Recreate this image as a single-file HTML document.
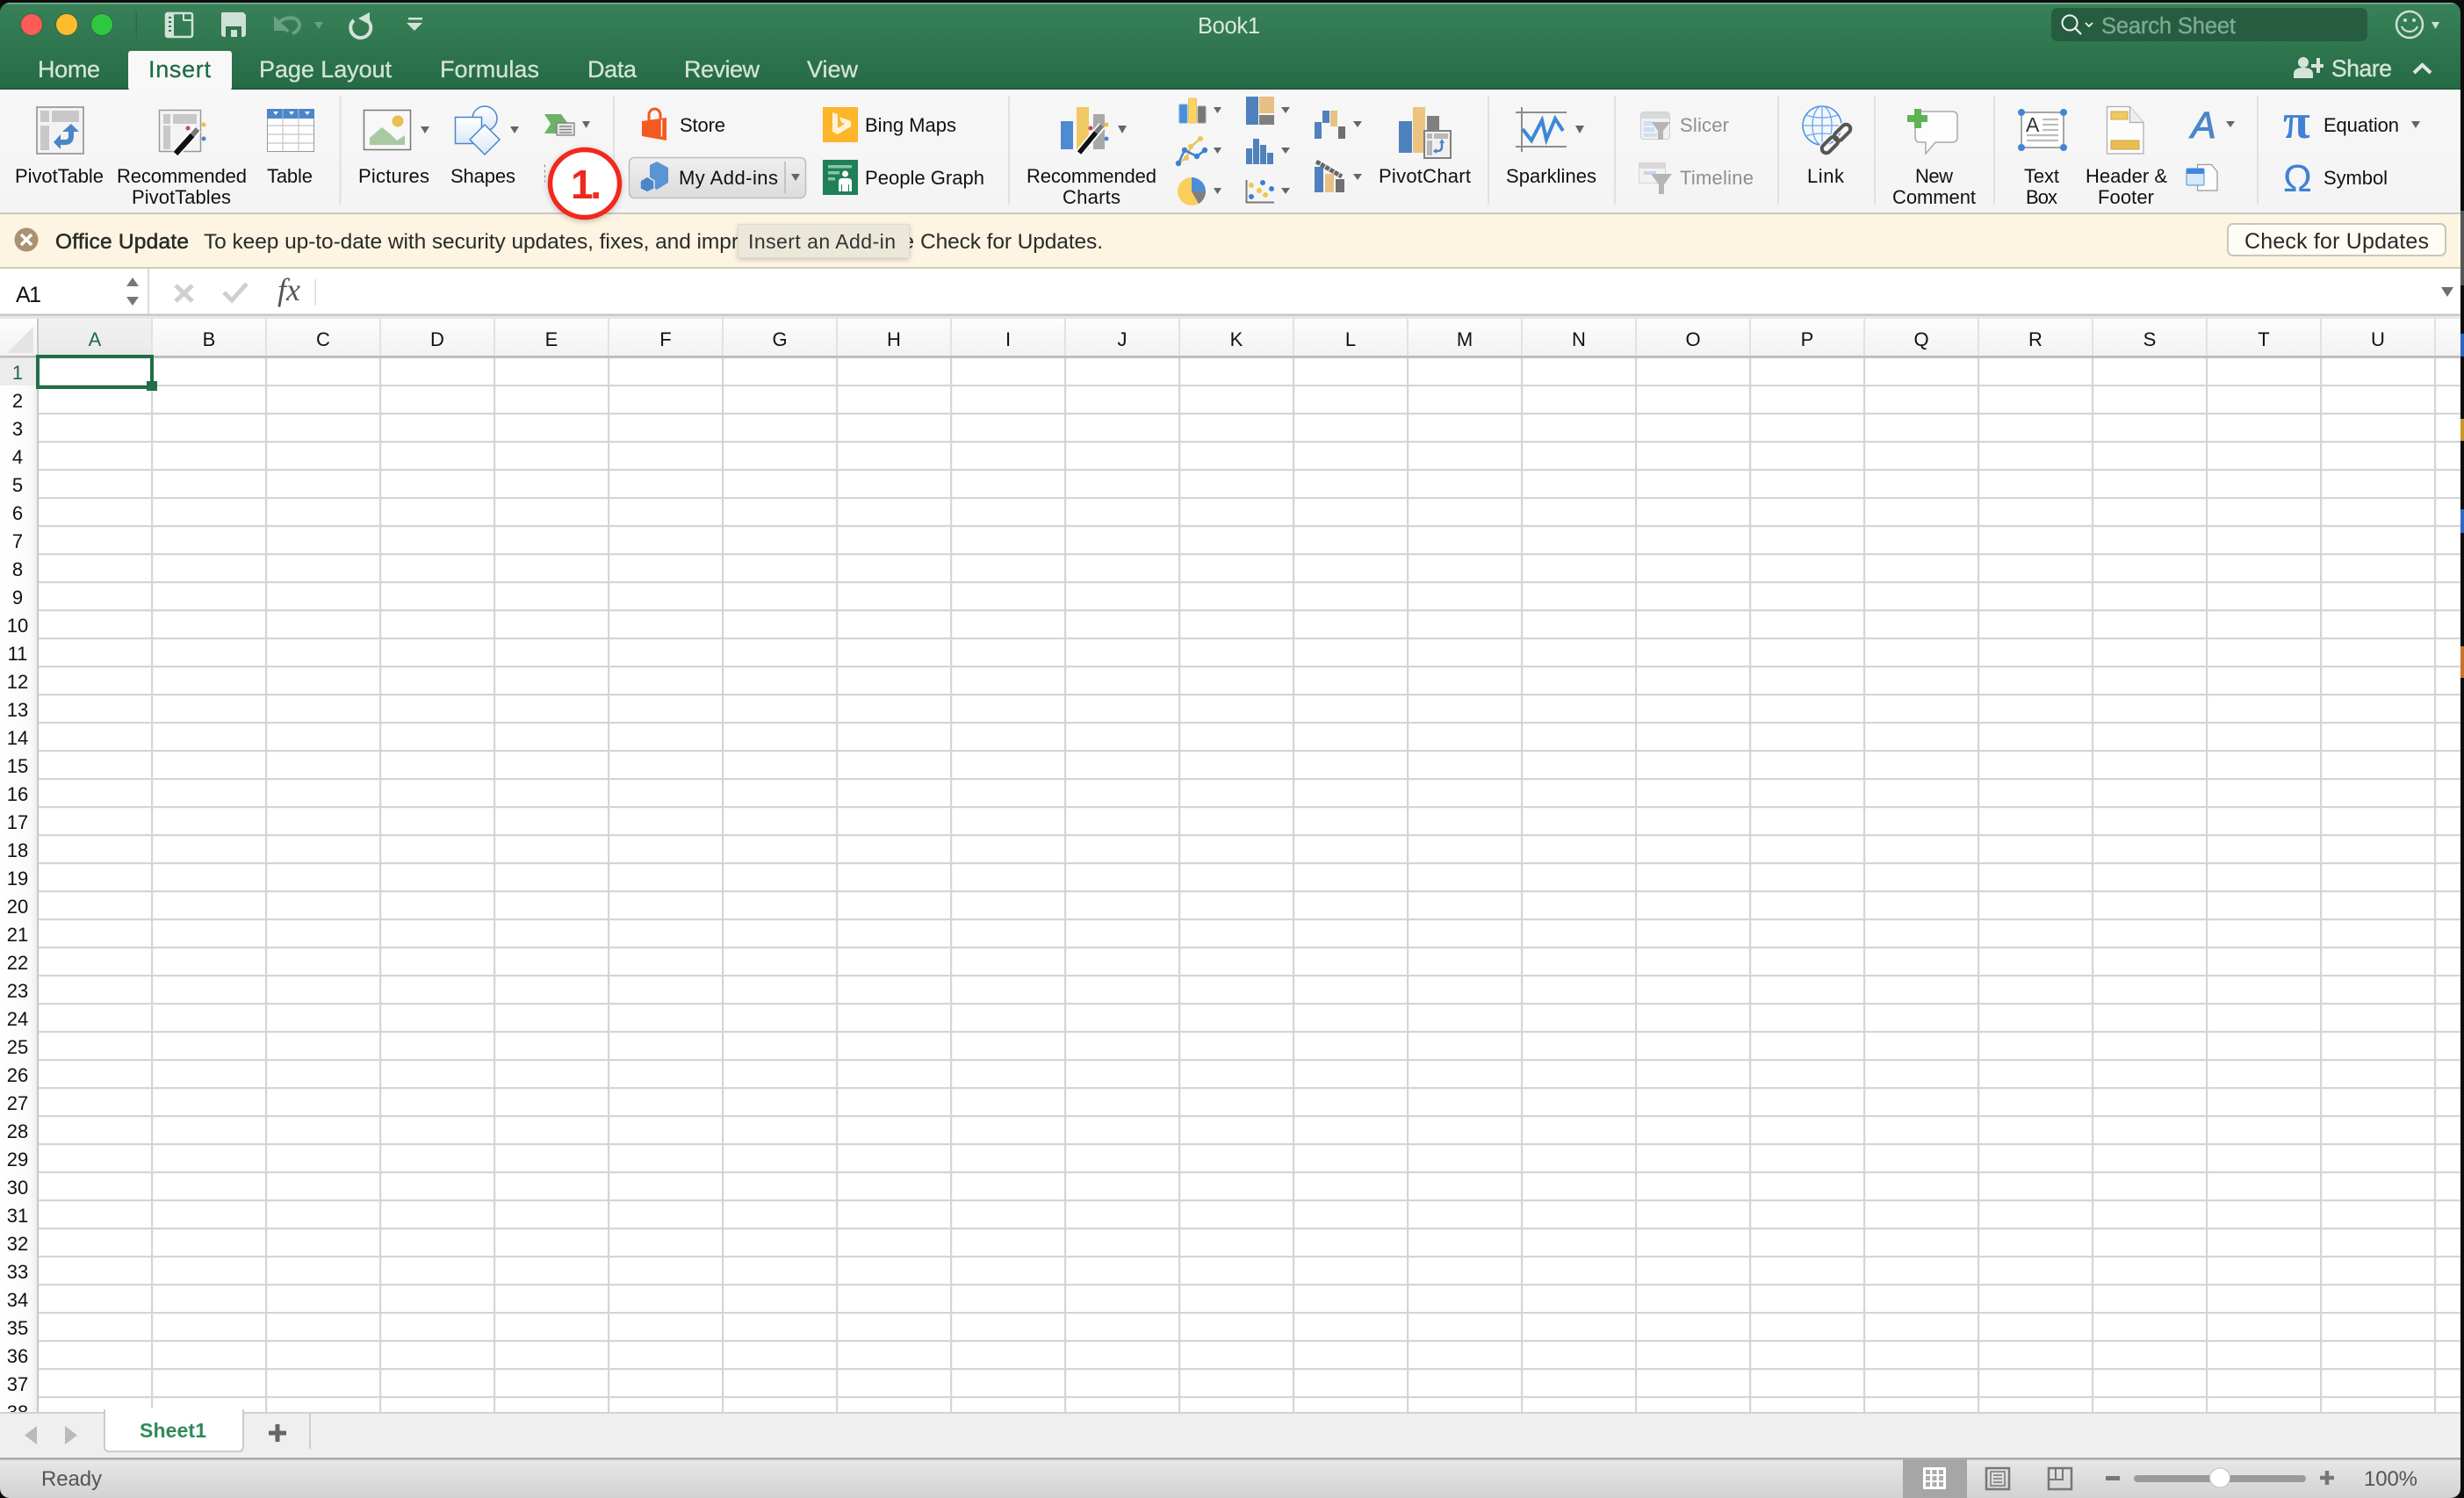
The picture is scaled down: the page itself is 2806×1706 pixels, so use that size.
<!DOCTYPE html>
<html><head><meta charset="utf-8"><title>Book1</title>
<style>
html,body{margin:0;padding:0;background:#0c0c0c;width:2806px;height:1706px;overflow:hidden}
svg{display:block;position:absolute;left:0;top:0;filter:blur(.35px)}
text{font-family:"Liberation Sans",sans-serif;white-space:pre}
.tab{font-size:27px;fill:#d3e3da;stroke:#d3e3da;stroke-width:.3px}
.l{font-size:22px;fill:#111}
.c{font-size:22px;fill:#111;text-anchor:middle}
.r{font-size:22px;fill:#111;text-anchor:middle}
.y{font-size:24.5px;fill:#2a2a2a}
</style></head><body>
<svg width="2806" height="1706" viewBox="0 0 2806 1706" xmlns="http://www.w3.org/2000/svg">
<defs>
<clipPath id="win"><rect x="0" y="3" width="2802" height="1703" rx="11"/></clipPath>
<linearGradient id="tb" x1="0" y1="0" x2="0" y2="1"><stop offset="0" stop-color="#398259"/><stop offset="1" stop-color="#256a45"/></linearGradient>
<linearGradient id="hd" x1="0" y1="0" x2="0" y2="1"><stop offset="0" stop-color="#fdfdfd"/><stop offset="1" stop-color="#f2f2f2"/></linearGradient>
<linearGradient id="hda" x1="0" y1="0" x2="0" y2="1"><stop offset="0" stop-color="#f2f2f2"/><stop offset="1" stop-color="#e9e9e9"/></linearGradient>
<linearGradient id="rh" x1="0" y1="0" x2="1" y2="0"><stop offset="0" stop-color="#fff"/><stop offset=".8" stop-color="#fafafa"/><stop offset="1" stop-color="#ececec"/></linearGradient>
<linearGradient id="st" x1="0" y1="0" x2="0" y2="1"><stop offset="0" stop-color="#e8e8e8"/><stop offset="1" stop-color="#d2d2d2"/></linearGradient>
<linearGradient id="btn" x1="0" y1="0" x2="0" y2="1"><stop offset="0" stop-color="#efefef"/><stop offset="1" stop-color="#dcdcdc"/></linearGradient>
<linearGradient id="shp" x1="0" y1="0" x2="0" y2="1"><stop offset="0" stop-color="#fff"/><stop offset="1" stop-color="#dbe8f7"/></linearGradient>
<linearGradient id="rb" x1="0" y1="0" x2="0" y2="1"><stop offset="0" stop-color="#f7f7f7"/><stop offset="1" stop-color="#f4f4f4"/></linearGradient>
<pattern id="grid" x="43" y="407" width="130" height="32" patternUnits="userSpaceOnUse">
<rect width="130" height="32" fill="#fff"/>
<rect x="0" y="0" width="130" height="1.2" fill="#d5d5d5"/><rect x="0" y="31" width="130" height="1" fill="#d5d5d5"/>
<rect x="0" y="0" width="1.2" height="32" fill="#d5d5d5"/><rect x="129" y="0" width="1" height="32" fill="#d5d5d5"/>
</pattern>
<filter id="sh" x="-30%" y="-30%" width="160%" height="160%"><feGaussianBlur stdDeviation="4"/></filter>
<filter id="sh2" x="-10%" y="-30%" width="120%" height="160%"><feGaussianBlur stdDeviation="3"/></filter>
</defs>

<rect width="2806" height="1706" fill="#0c0c0c"/>
<!-- dock slivers -->
<rect x="2802" y="380" width="4" height="26" fill="#2f62c6"/>
<rect x="2802" y="477" width="4" height="25" fill="#c9982a"/>
<rect x="2802" y="580" width="4" height="27" fill="#3565c9"/>
<rect x="2802" y="736" width="4" height="36" fill="#c8742e"/>
<rect x="2802" y="240" width="4" height="85" fill="#555"/>

<g clip-path="url(#win)">
<!-- title bar -->
<rect x="0" y="3" width="2802" height="99" fill="url(#tb)"/>
<rect x="0" y="3" width="2802" height="1.5" fill="#7fb39a"/>
<rect x="0" y="100" width="2802" height="2" fill="#1d5a3a"/>

<!-- traffic lights -->
<circle cx="36" cy="28" r="12.5" fill="#fc5b57" stroke="#2f6a4a" stroke-width="1"/>
<circle cx="76" cy="28" r="12.5" fill="#fdbc2e" stroke="#2f6a4a" stroke-width="1"/>
<circle cx="116" cy="28" r="12.5" fill="#2ec840" stroke="#2f6a4a" stroke-width="1"/>
<rect x="154.5" y="12" width="1.5" height="31" fill="#2a6e49"/>

<!-- QAT: doc -->
<rect x="189" y="15" width="30" height="27" rx="2" fill="none" stroke="#d2e2d9" stroke-width="2.5"/>
<rect x="189" y="15" width="9" height="27" fill="#d2e2d9"/>
<path d="M192 20h3M192 25h3M192 30h3M192 35h3" stroke="#2d7350" stroke-width="2"/>
<path d="M209 15v8h10" fill="none" stroke="#d2e2d9" stroke-width="2"/>
<!-- QAT: save -->
<path d="M254 14h23l3 3v22a3 3 0 0 1-3 3h-22a3 3 0 0 1-3-3v-23a2 2 0 0 1 2-2z" fill="#cfe0d6"/>
<rect x="257" y="30" width="18" height="12" fill="#2d7350"/>
<rect x="263" y="34" width="7" height="8" fill="#cfe0d6"/>
<!-- QAT: undo -->
<path d="M322 30l6 6M316 27c8-9 24-9 25 1 0 5-4 9-8 10" fill="none" stroke="#6aa085" stroke-width="4"/>
<path d="M312 18v17h17z" fill="#6aa085"/>
<path d="M358 25h10l-5 8z" fill="#6aa085"/>
<!-- QAT: repeat -->
<path d="M403 23A11.5 11.5 0 1 0 414 20.500" fill="none" stroke="#d2e2d9" stroke-width="4"/>
<path d="M408 21L421 14V28z" fill="#d2e2d9"/>
<!-- QAT: customize -->
<rect x="465" y="20" width="16" height="2.5" fill="#d2e2d9"/>
<path d="M463 26h18l-9 9z" fill="#d2e2d9"/>

<!-- title -->
<text x="1364" y="38" textLength="71" style="font-size:25.500px;fill:#dbe9e0">Book1</text>

<!-- search -->
<rect x="2336" y="9" width="360" height="38" rx="7" fill="#265d41"/>
<circle cx="2357" cy="26" r="8.5" fill="none" stroke="#eef4f0" stroke-width="2"/>
<path d="M2363 32l7 7" stroke="#eef4f0" stroke-width="2.2"/>
<path d="M2375 26l4 4 4-4" fill="none" stroke="#eef4f0" stroke-width="1.8"/>
<text x="2393" y="38" textLength="153" style="font-size:25.500px;fill:#7ea993;stroke:#7ea993;stroke-width:.35px">Search Sheet</text>
<!-- smile -->
<circle cx="2744" cy="28" r="15" fill="none" stroke="#cfdfd6" stroke-width="2.5"/>
<circle cx="2739" cy="23" r="2" fill="#cfdfd6"/><circle cx="2749" cy="23" r="2" fill="#cfdfd6"/>
<path d="M2735 30c3 8 15 8 18 0" fill="none" stroke="#cfdfd6" stroke-width="2.2"/>
<path d="M2769 25h9l-4.500 8z" fill="#cfdfd6"/>

<!-- tabs -->
<rect x="146" y="58" width="118" height="44.5" rx="3" fill="#f8f8f8"/>
<text class="tab" x="43" y="88" textLength="71">Home</text>
<text class="tab" x="169" y="88" textLength="71" style="fill:#1f6b45;stroke:#1f6b45">Insert</text>
<text class="tab" x="295" y="88" textLength="151">Page Layout</text>
<text class="tab" x="501" y="88" textLength="113">Formulas</text>
<text class="tab" x="669" y="88" textLength="56">Data</text>
<text class="tab" x="779" y="88" textLength="86">Review</text>
<text class="tab" x="919" y="88" textLength="58">View</text>

<!-- share -->
<circle cx="2623" cy="71" r="6" fill="#d4e4da"/>
<path d="M2612 89v-5c0-5 5-7 11-7s11 2 11 7v5z" fill="#d4e4da"/>
<path d="M2640 66v17M2632 75h14" stroke="#d4e4da" stroke-width="4"/>
<text x="2655" y="87" textLength="69" style="font-size:26.500px;fill:#d4e4da;stroke:#d4e4da;stroke-width:.4px">Share</text>
<path d="M2749 83l9.500-9 9.500 9" fill="none" stroke="#dce9e1" stroke-width="4"/>

<!-- ribbon -->
<rect x="0" y="102" width="2802" height="140" fill="url(#rb)"/>
<rect x="0" y="242" width="2802" height="2.5" fill="#c9c9c9"/>
<g fill="#e0e0e0">
<rect x="386.5" y="110" width="2" height="123"/><rect x="698" y="110" width="2" height="123"/><rect x="1148" y="110" width="2" height="123"/>
<rect x="1694" y="110" width="2" height="123"/><rect x="1838" y="110" width="2" height="123"/><rect x="2024" y="110" width="2" height="123"/>
<rect x="2134" y="110" width="2" height="123"/><rect x="2270" y="110" width="2" height="123"/><rect x="2570" y="110" width="2" height="123"/>
</g>

<!-- PivotTable -->
<rect x="42" y="122" width="53" height="53" fill="#f3f3f3" stroke="#8a8a8a" stroke-width="1.5"/>
<g fill="#c8c8c8"><rect x="46" y="126" width="10" height="13"/><rect x="59" y="126" width="31" height="13"/><rect x="46" y="143" width="10" height="28"/></g>
<path d="M68 162h6q7 0 7-7v-7" fill="none" stroke="#4a86c8" stroke-width="6"/>
<path d="M71 150l10-9 9 9zM69 153v17l-8-8z" fill="#4a86c8"/>
<!-- Recommended Pivot -->
<rect x="181.5" y="125.5" width="47" height="47" fill="#f4f4f4" stroke="#999" stroke-width="1.5"/>
<g fill="#c8c8c8"><rect x="186" y="130" width="8" height="11"/><rect x="197" y="130" width="27" height="11"/><rect x="186" y="143" width="8" height="27"/></g>
<path d="M200 175l25-28" stroke="#fff" stroke-width="10"/><path d="M200 175l19-21" stroke="#111" stroke-width="6.5"/><path d="M219 154l6-7" stroke="#777" stroke-width="6"/>
<circle cx="214" cy="146" r="2.5" fill="#c94a4a"/><circle cx="232" cy="142" r="2.5" fill="#eebf3c"/><circle cx="232" cy="158" r="2.5" fill="#4a86c8"/>
<!-- Table -->
<rect x="304.5" y="124.5" width="53" height="48" fill="#fff" stroke="#999"/>
<rect x="304" y="124" width="54" height="11" fill="#4a86c8"/>
<path d="M322 135v37M340 135v37M305 143h52M305 153h52M305 163h52" stroke="#c4c4c4" stroke-width="1.2"/>
<path d="M322 124v11M340 124v11" stroke="#9fc0e4" stroke-width="1"/>
<path d="M311 127h6l-3 4zM329 127h6l-3 4zM347 127h6l-3 4z" fill="#fff"/>
<!-- Pictures -->
<rect x="414.5" y="125.5" width="53" height="45" fill="#f8f8f8" stroke="#777" stroke-width="1.5"/>
<path d="M421 165v-8l14-12 11 9 6 6 9-6v11z" fill="#a9c9a3"/>
<ellipse cx="453" cy="138" rx="6.5" ry="6.5" fill="#e9bf50"/>
<path d="M479 144h10l-5 8z" fill="#666"/>
<!-- Shapes -->
<circle cx="552" cy="135" r="14" fill="url(#shp)" stroke="#4a86c8" stroke-width="1.5"/>
<rect x="518.5" y="133.5" width="30" height="30" fill="url(#shp)" stroke="#4a86c8" stroke-width="1.5"/>
<path d="M552 142l17 17-17 17-17-17z" fill="url(#shp)" stroke="#4a86c8" stroke-width="1.5"/>
<path d="M581 144h10l-5 8z" fill="#666"/>
<!-- SmartArt -->
<path d="M620 130h19l8 11-8 11h-19l7-11z" fill="#6cb364"/>
<rect x="634" y="140" width="20" height="14" fill="#e4e4e4" stroke="#777" stroke-width="1.2"/>
<path d="M637 144h14M637 147.5h14M637 151h14" stroke="#777" stroke-width="1.2"/>
<path d="M663 138h9l-4.500 8z" fill="#666"/>
<path d="M620.5 187.5v20" fill="none" stroke="#888" stroke-dasharray="3 3"/>

<!-- ribbon labels -->
<text class="l" x="17" y="208" textLength="101">PivotTable</text>
<text class="l" x="133" y="208" textLength="148">Recommended</text>
<text class="l" x="150" y="232" textLength="113">PivotTables</text>
<text class="l" x="304" y="208" textLength="52">Table</text>
<text class="l" x="408" y="208" textLength="81">Pictures</text>
<text class="l" x="513" y="208" textLength="74">Shapes</text>

<!-- Store -->
<path d="M739 138v-7a6.500 7 0 0 1 13 0v4" fill="none" stroke="#f4591f" stroke-width="3"/>
<path d="M731 138l28-4v26l-28-5z" fill="#f4591f"/>
<path d="M753.5 136.5v19" stroke="#fff" stroke-width="1.5"/>
<text class="l" x="774" y="150" textLength="52">Store</text>
<!-- My Add-ins -->
<rect x="716.5" y="179.5" width="201" height="46" rx="6" fill="url(#btn)" stroke="#bdbdbd" stroke-width="1.5"/>
<rect x="893" y="184" width="2" height="36" fill="#c4c4c4"/>
<path d="M748 184l13 7v17l-13 8-8-4v-24z" fill="#5b93d5"/>
<path d="M737 201l8 5v9l-8 4-8-4v-9z" fill="#4a86c8" stroke="#e6e6e6" stroke-width="1.5"/>
<text class="l" x="773" y="210" textLength="113">My Add-ins</text>
<path d="M901 198h10l-5 8z" fill="#666"/>
<!-- Bing -->
<rect x="937" y="122" width="40" height="40" fill="#fdb52a"/>
<path d="M948 128l6 2v16l8-5-4-2-2-6 13 5v6l-15 9-6-3z" fill="#fff3d6"/>
<text class="l" x="985" y="150" textLength="104">Bing Maps</text>
<!-- People -->
<rect x="937" y="182" width="40" height="40" fill="#1f7f57"/>
<g fill="#8cc3a7"><rect x="943" y="188" width="27" height="3.5"/><rect x="943" y="195" width="13" height="3.5"/><rect x="943" y="202" width="8" height="3.5"/></g>
<circle cx="962.5" cy="198" r="3.5" fill="#fff"/>
<path d="M955 218v-11q0-4 4-4h7q4 0 4 4v11h-3v-8h-1v8h-7v-8h-1v8z" fill="#fff"/>
<text class="l" x="985" y="210" textLength="136">People Graph</text>

<!-- Rec charts -->
<rect x="1208" y="138" width="14" height="32" fill="#4f8bd0"/>
<rect x="1226" y="122" width="14" height="48" fill="#efc964"/>
<rect x="1245" y="130" width="13" height="40" fill="#a8a8a8"/>
<path d="M1229 174l26-31" stroke="#fff" stroke-width="9"/>
<path d="M1229 174l19-23" stroke="#111" stroke-width="5.500"/><path d="M1248 151l7-8" stroke="#777" stroke-width="5.500"/>
<circle cx="1242" cy="146" r="2.5" fill="#c94a4a"/><circle cx="1260" cy="142" r="2.5" fill="#eebf3c"/><circle cx="1260" cy="158" r="2.5" fill="#4a86c8"/>
<path d="M1273 143h10l-5 9z" fill="#666"/>
<text class="l" x="1169" y="208" textLength="148">Recommended</text>
<text class="l" x="1210" y="232" textLength="66">Charts</text>
<!-- small charts -->
<rect x="1343" y="119" width="9" height="21" rx="1" fill="#4a8edb" stroke="#6ea4e2"/>
<rect x="1353.5" y="112" width="9" height="28" rx="1" fill="#fbd563" stroke="#e9c25e"/>
<rect x="1364" y="121" width="9" height="19" rx="1" fill="#777" stroke="#999"/>
<path d="M1367 158l-11 9-5 13-9 5" fill="none" stroke="#eec25a" stroke-width="2.5"/>
<g fill="#eec25a"><circle cx="1367" cy="158" r="3"/><circle cx="1356" cy="167" r="3"/><circle cx="1351" cy="180" r="3"/></g>
<path d="M1342 186l7-15 14 7 9-7" fill="none" stroke="#3d80d2" stroke-width="2.5"/>
<g fill="#3d80d2"><circle cx="1342" cy="186" r="3.2"/><circle cx="1349" cy="171" r="3.2"/><circle cx="1363" cy="178" r="3.2"/><circle cx="1372" cy="171" r="3.2"/></g>
<circle cx="1357" cy="218" r="16" fill="#fbcf5c"/>
<path d="M1357 218v-16a16 16 0 0 1 16 16z" fill="#4a8edb"/>
<path d="M1357 218h16a16 16 0 0 1-8 14z" fill="#7f7f7f"/>
<g fill="#666"><path d="M1382 122h9l-4.500 7zM1382 168h9l-4.500 7zM1382 214h9l-4.500 7z"/></g>
<rect x="1419" y="110" width="14" height="32" fill="#4f81bd"/>
<rect x="1434" y="110" width="17" height="19" fill="#e8c083"/>
<rect x="1434" y="131" width="17" height="11" fill="#7f7f7f"/>
<g fill="#4f81bd"><rect x="1419" y="169" width="7" height="18"/><rect x="1427" y="158" width="7" height="29"/><rect x="1435" y="165" width="7" height="22"/><rect x="1443" y="174" width="7" height="13"/></g>
<path d="M1419.5 205v25.5H1451" fill="none" stroke="#777" stroke-width="2"/>
<g fill="#f0c64f"><circle cx="1425" cy="211" r="3"/><circle cx="1434" cy="217" r="3"/><circle cx="1441" cy="222" r="3"/></g>
<g fill="#3d80d2"><circle cx="1438" cy="208" r="3"/><circle cx="1448" cy="215" r="3"/><circle cx="1425" cy="224" r="3"/></g>
<g fill="#666"><path d="M1459 122h10l-5 7zM1459 168h10l-5 7zM1459 214h10l-5 7z"/></g>
<!-- waterfall -->
<rect x="1497" y="139" width="8" height="19" fill="#4f81bd"/><rect x="1506" y="126" width="8" height="14" fill="#4f81bd"/>
<rect x="1515" y="126" width="8" height="18" fill="#e8c083"/><rect x="1524" y="144" width="8" height="14" fill="#707070"/>
<path d="M1541 138h10l-5 7z" fill="#666"/>
<!-- combo -->
<rect x="1497" y="190" width="10" height="29" fill="#4f81bd"/><rect x="1509" y="198" width="10" height="21" fill="#e8c083"/><rect x="1521" y="204" width="10" height="15" fill="#707070"/>
<path d="M1499 184l29 17" stroke="#666" stroke-width="5" stroke-dasharray="5 1"/>
<path d="M1541 198h10l-5 7z" fill="#666"/>
<!-- PivotChart -->
<rect x="1593" y="138" width="15" height="36" fill="#4f81bd"/>
<rect x="1609" y="122" width="14" height="52" fill="#edc381"/>
<rect x="1625" y="132" width="14" height="16" fill="#7f7f7f"/>
<rect x="1622" y="149" width="30" height="31" fill="#f0f0f0" stroke="#808080" stroke-width="2"/>
<g fill="#b8b8b8"><rect x="1625" y="152" width="6" height="6"/><rect x="1633" y="152" width="16" height="6"/><rect x="1625" y="160" width="6" height="17"/></g>
<path d="M1633 172h4q5 0 5-5v-6" fill="none" stroke="#4a86c8" stroke-width="2.5"/>
<path d="M1639 163l3-5 3 5zM1636 169v6l-4-3z" fill="#4a86c8"/>
<text class="l" x="1570" y="208" textLength="105">PivotChart</text>
<!-- Sparklines -->
<path d="M1726 128h58M1726 167h58M1733 122v51" stroke="#8d8d8d" stroke-width="2"/>
<path d="M1734 147l10 13 12-23 5 22 10-24 9 14" fill="none" stroke="#3b88d8" stroke-width="4"/>
<path d="M1794 143h10l-5 9z" fill="#666"/>
<text class="l" x="1715" y="208" textLength="103">Sparklines</text>
<!-- Slicer -->
<rect x="1868.5" y="127.5" width="33" height="31" rx="3" fill="#f0f0f0" stroke="#cfcfcf"/>
<rect x="1869" y="128" width="32" height="7" fill="#d9d9d9"/>
<g fill="#cfe0f2"><rect x="1872" y="138" width="12" height="5"/><rect x="1872" y="145" width="12" height="5"/><rect x="1872" y="152" width="15" height="4"/></g>
<path d="M1881 139h21l-8 10v10h-6v-10z" fill="#b5b5b5"/>
<text class="l" x="1913" y="150" textLength="56" style="fill:#8f8f8f">Slicer</text>
<!-- Timeline -->
<rect x="1866.5" y="185.5" width="30" height="23" fill="#f2f2f2" stroke="#d4d4d4"/>
<rect x="1867" y="186" width="29" height="6" fill="#d9d9d9"/>
<path d="M1872 195h14v4h-14z" fill="#c6d6e8"/>
<path d="M1880 198h24l-9 12v11h-6v-11z" fill="#b5b5b5"/>
<text class="l" x="1913" y="210" textLength="84" style="fill:#8f8f8f">Timeline</text>
<!-- Link -->
<circle cx="2075" cy="143" r="22" fill="#f3f7fc" stroke="#4a90e2" stroke-width="1.5"/>
<ellipse cx="2075" cy="143" rx="11" ry="22" fill="none" stroke="#6ea6e6" stroke-width="1.3"/>
<path d="M2053 143h44M2075 121v44M2057 131c10 4 26 4 36 0M2057 155c10-4 26-4 36 0" fill="none" stroke="#6ea6e6" stroke-width="1.3"/>
<g fill="none" stroke="#f5f5f5" stroke-width="7"><rect x="-11" y="-5" width="22" height="10" rx="5" transform="translate(2084 165) rotate(-45)"/><rect x="-11" y="-5" width="22" height="10" rx="5" transform="translate(2098 151) rotate(-45)"/></g>
<g fill="none" stroke="#555" stroke-width="4"><rect x="-11" y="-5" width="22" height="10" rx="5" transform="translate(2084 165) rotate(-45)"/><rect x="-11" y="-5" width="22" height="10" rx="5" transform="translate(2098 151) rotate(-45)"/></g>
<text class="l" x="2058" y="208" textLength="42">Link</text>
<!-- New Comment -->
<path d="M2186 127h38a5 5 0 0 1 5 5v25a5 5 0 0 1-5 5h-20l-11 13v-13h-7a5 5 0 0 1-5-5v-25a5 5 0 0 1 5-5z" fill="#fdfdfd" stroke="#9c9c9c" stroke-width="1.3"/>
<path d="M2172 131h8v-7h8v7h7v8h-7v7h-8v-7h-8z" fill="#5eb354"/>
<text class="l" x="2181" y="208" textLength="43">New</text>
<text class="l" x="2155" y="232" textLength="95">Comment</text>
<!-- Text box -->
<rect x="2302" y="128" width="48" height="40" fill="#fff" stroke="#888" stroke-width="1.5"/>
<text x="2307" y="150" style="font-size:23px;fill:#333">A</text>
<path d="M2326 136h18M2326 142h18M2326 148h18M2308 154h36M2308 160h36" stroke="#bdbdbd" stroke-width="2.2"/>
<g fill="#3d87d6"><circle cx="2302" cy="128" r="4"/><circle cx="2350" cy="128" r="4"/><circle cx="2302" cy="168" r="4"/><circle cx="2350" cy="168" r="4"/></g>
<text class="l" x="2305" y="208" textLength="40">Text</text>
<text class="l" x="2307" y="232" textLength="36">Box</text>
<!-- Header -->
<path d="M2399.5 121.5h26l15.500 18v35.5h-41.500z" fill="#fcfcfc" stroke="#ababab" stroke-width="1.2"/>
<path d="M2425.5 121.5v18h15.500" fill="#eee" stroke="#ababab" stroke-width="1.2"/>
<rect x="2404" y="127" width="19" height="9" fill="#f0c864" stroke="#d4a941"/>
<rect x="2404" y="160" width="32" height="10" fill="#e8bd55" stroke="#d0a43a"/>
<text class="l" x="2375" y="208" textLength="93">Header &amp;</text>
<text class="l" x="2389" y="232" textLength="64">Footer</text>
<!-- WordArt -->
<text x="2495" y="157" style="font-size:43px;font-style:italic;fill:#4a86c8;stroke:#4a86c8;stroke-width:1px">A</text>
<path d="M2535 138h10l-5 7z" fill="#666"/>
<!-- Object -->
<path d="M2502.5 187.5h16l6.500 8v21.5h-22.500z" fill="#fcfcfc" stroke="#999" stroke-width="1.2"/>
<rect x="2490" y="192" width="20" height="19" rx="1.5" fill="#d8e8f8" stroke="#4a90e2"/>
<rect x="2490" y="192" width="20" height="6" fill="#3f87dc"/>
<!-- Equation / Symbol -->
<text x="2600" y="157" textLength="35" style="font-size:56px;font-family:'Liberation Serif',serif;font-weight:bold;fill:#3f82d4">π</text>
<text class="l" x="2646" y="150" textLength="86">Equation</text>
<path d="M2746 138h10l-5 8z" fill="#666"/>
<text x="2600" y="218" style="font-size:44px;fill:#3f82d4" textLength="34">Ω</text>
<text class="l" x="2646" y="210" textLength="73">Symbol</text>

<!-- update bar -->
<rect x="0" y="244" width="2802" height="60" fill="#fdf4e1"/>
<rect x="0" y="304" width="2802" height="2" fill="#cfcbb5"/>
<circle cx="30" cy="273" r="13.5" fill="#a89273"/>
<path d="M24 267l12 12M36 267l-12 12" stroke="#fff" stroke-width="3.5"/>
<text class="y" x="63" y="283" textLength="152" style="stroke:#2a2a2a;stroke-width:.5px">Office Update</text>
<text class="y" x="232" y="283" textLength="609">To keep up-to-date with security updates, fixes, and impr</text>
<text class="y" x="841" y="283" textLength="200">ovements, choose</text>
<text class="y" x="1048" y="283" textLength="208">Check for Updates.</text>
<rect x="2537" y="255" width="248" height="36" rx="6" fill="#fefcf4" stroke="#c9c6ba" stroke-width="2"/>
<text class="y" x="2556" y="283" textLength="210" style="font-size:25px">Check for Updates</text>

<!-- tooltip -->
<rect x="840" y="257" width="196" height="39" fill="#000" opacity=".18" filter="url(#sh2)"/>
<rect x="840.5" y="255.5" width="195" height="38" fill="#ece8d9" stroke="#e0dccb"/>
<text x="852" y="283" textLength="168" style="font-size:23px;fill:#333">Insert an Add-in</text>

<!-- formula bar -->
<rect x="0" y="306" width="2802" height="52" fill="#fff"/>
<rect x="168" y="306" width="2" height="52" fill="#dcdcdc"/>
<text x="18" y="344" textLength="29" style="font-size:25px;fill:#111">A1</text>
<path d="M151 316l7 10h-14zM151 348l7-10h-14z" fill="#777"/>
<path d="M200 325l19 18M219 325l-19 18" stroke="#cfcfcf" stroke-width="5"/>
<path d="M255 333l9 9 17-19" fill="none" stroke="#cfcfcf" stroke-width="5"/>
<text x="316" y="342" style="font-size:36px;font-family:'Liberation Serif',serif;font-style:italic;fill:#555">fx</text>
<rect x="358.5" y="318" width="1.5" height="30" fill="#dcdcdc"/>
<path d="M2780 327h14l-7 11z" fill="#6e6e6e"/>
<rect x="0" y="357.5" width="2802" height="2" fill="#bfbfbf"/>
<rect x="0" y="359.5" width="2802" height="4" fill="#e6e6e6"/>

<!-- headers -->
<rect x="0" y="363" width="2802" height="43" fill="url(#hd)"/>
<rect x="43" y="363" width="130" height="43" fill="url(#hda)"/>
<path d="M8 402l30-30v30z" fill="#e4e4e4"/>
<g fill="#e2e2e2"><rect x="42" y="363" width="2" height="43"/><rect x="172" y="363" width="2" height="43"/><rect x="302" y="363" width="2" height="43"/><rect x="432" y="363" width="2" height="43"/><rect x="562" y="363" width="2" height="43"/><rect x="692" y="363" width="2" height="43"/><rect x="822" y="363" width="2" height="43"/><rect x="952" y="363" width="2" height="43"/><rect x="1082" y="363" width="2" height="43"/><rect x="1212" y="363" width="2" height="43"/><rect x="1342" y="363" width="2" height="43"/><rect x="1472" y="363" width="2" height="43"/><rect x="1602" y="363" width="2" height="43"/><rect x="1732" y="363" width="2" height="43"/><rect x="1862" y="363" width="2" height="43"/><rect x="1992" y="363" width="2" height="43"/><rect x="2122" y="363" width="2" height="43"/><rect x="2252" y="363" width="2" height="43"/><rect x="2382" y="363" width="2" height="43"/><rect x="2512" y="363" width="2" height="43"/><rect x="2642" y="363" width="2" height="43"/><rect x="2772" y="363" width="2" height="43"/></g>
<text class="c" x="108" y="394" style="fill:#1f6b45">A</text>
<text class="c" x="238" y="394">B</text><text class="c" x="368" y="394">C</text><text class="c" x="498" y="394">D</text><text class="c" x="628" y="394">E</text><text class="c" x="758" y="394">F</text><text class="c" x="888" y="394">G</text><text class="c" x="1018" y="394">H</text><text class="c" x="1148" y="394">I</text><text class="c" x="1278" y="394">J</text><text class="c" x="1408" y="394">K</text><text class="c" x="1538" y="394">L</text><text class="c" x="1668" y="394">M</text><text class="c" x="1798" y="394">N</text><text class="c" x="1928" y="394">O</text><text class="c" x="2058" y="394">P</text><text class="c" x="2188" y="394">Q</text><text class="c" x="2318" y="394">R</text><text class="c" x="2448" y="394">S</text><text class="c" x="2578" y="394">T</text><text class="c" x="2708" y="394">U</text>

<!-- grid -->
<rect x="43" y="407" width="2759" height="1201" fill="url(#grid)"/>
<rect x="0" y="407" width="43" height="1201" fill="url(#rh)"/>
<rect x="0" y="407" width="43" height="32" fill="#ececec"/>
<rect x="42" y="363" width="2" height="1245" fill="#c8c8c8"/>
<rect x="0" y="405" width="2802" height="2.5" fill="#bcbcbc"/>

<!-- row numbers -->
<text class="r" x="20" y="432" style="fill:#1f6b45">1</text>
<text class="r" x="20" y="464">2</text><text class="r" x="20" y="496">3</text><text class="r" x="20" y="528">4</text><text class="r" x="20" y="560">5</text><text class="r" x="20" y="592">6</text><text class="r" x="20" y="624">7</text><text class="r" x="20" y="656">8</text><text class="r" x="20" y="688">9</text><text class="r" x="20" y="720">10</text><text class="r" x="20" y="752">11</text><text class="r" x="20" y="784">12</text><text class="r" x="20" y="816">13</text><text class="r" x="20" y="848">14</text><text class="r" x="20" y="880">15</text><text class="r" x="20" y="912">16</text><text class="r" x="20" y="944">17</text><text class="r" x="20" y="976">18</text><text class="r" x="20" y="1008">19</text><text class="r" x="20" y="1040">20</text><text class="r" x="20" y="1072">21</text><text class="r" x="20" y="1104">22</text><text class="r" x="20" y="1136">23</text><text class="r" x="20" y="1168">24</text><text class="r" x="20" y="1200">25</text><text class="r" x="20" y="1232">26</text><text class="r" x="20" y="1264">27</text><text class="r" x="20" y="1296">28</text><text class="r" x="20" y="1328">29</text><text class="r" x="20" y="1360">30</text><text class="r" x="20" y="1392">31</text><text class="r" x="20" y="1424">32</text><text class="r" x="20" y="1456">33</text><text class="r" x="20" y="1488">34</text><text class="r" x="20" y="1520">35</text><text class="r" x="20" y="1552">36</text><text class="r" x="20" y="1584">37</text><text class="r" x="20" y="1616">38</text>

<!-- selection -->
<rect x="43" y="406" width="130" height="35" fill="none" stroke="#1f6e45" stroke-width="4"/>
<rect x="167" y="434" width="12" height="11" fill="#1f6e45"/>

<!-- tab bar -->
<rect x="0" y="1608" width="2802" height="52" fill="#efefef"/>
<rect x="0" y="1608" width="2802" height="2" fill="#d2d2d2"/>
<path d="M42 1624v21l-14-10.500zM74 1624v21l14-10.500z" fill="#b9b9b9"/>
<path d="M119 1606h158v42a5 5 0 0 1-5 5h-148a5 5 0 0 1-5-5z" fill="#fff" stroke="#bdbdbd" stroke-width="1.5"/>
<rect x="120" y="1604" width="156" height="8" fill="#fff"/>
<text x="159" y="1637" textLength="76" style="font-size:23px;font-weight:bold;fill:#2f8a59">Sheet1</text>
<path d="M316 1622v20M306 1632h20" stroke="#666" stroke-width="5"/>
<rect x="352" y="1610" width="2" height="40" fill="#cfcfcf"/>

<!-- status bar -->
<rect x="0" y="1660" width="2802" height="46" fill="url(#st)"/>
<rect x="0" y="1660" width="2802" height="2.5" fill="#a9a9a9"/>
<text x="47" y="1692" textLength="69" style="font-size:24px;fill:#555">Ready</text>
<rect x="2167" y="1662" width="73" height="44" fill="#a6a6a6"/>
<rect x="2190" y="1671" width="26" height="25" rx="1" fill="#fff"/>
<g fill="#ababab"><rect x="2193" y="1674" width="5" height="5"/><rect x="2200.5" y="1674" width="5" height="5"/><rect x="2208" y="1674" width="5" height="5"/><rect x="2193" y="1681" width="5" height="5"/><rect x="2200.5" y="1681" width="5" height="5"/><rect x="2208" y="1681" width="5" height="5"/><rect x="2193" y="1688" width="5" height="5"/><rect x="2200.5" y="1688" width="5" height="5"/><rect x="2208" y="1688" width="5" height="5"/></g>
<rect x="2262" y="1672" width="26" height="24" fill="none" stroke="#777" stroke-width="2.5"/>
<rect x="2267" y="1676" width="16" height="16" fill="none" stroke="#777" stroke-width="1.5"/>
<path d="M2270 1680h10M2270 1684h10M2270 1688h10" stroke="#777" stroke-width="1.5"/>
<rect x="2333" y="1672" width="26" height="24" fill="none" stroke="#777" stroke-width="2.5"/>
<path d="M2333 1685h16v-13M2341 1672v13" fill="none" stroke="#777" stroke-width="2"/>
<rect x="2398" y="1681" width="16" height="5" fill="#777"/>
<rect x="2430" y="1680" width="196" height="8" rx="4" fill="#9a9a9a"/>
<ellipse cx="2528" cy="1683" rx="11.5" ry="11" fill="#fff" stroke="#c0c0c0"/>
<path d="M2650 1675v16M2642 1683h16" stroke="#777" stroke-width="4.5"/>
<text x="2692" y="1692" textLength="61" style="font-size:24px;fill:#555">100%</text>
</g>

<!-- callout -->
<ellipse cx="666" cy="211" rx="41" ry="40" fill="#000" opacity=".3" filter="url(#sh)"/>
<ellipse cx="666" cy="209" rx="39.5" ry="38.5" fill="#fff" stroke="#f3281c" stroke-width="5.5"/>
<text x="650" y="226" textLength="35" style="font-size:46px;font-weight:bold;fill:#ee2a1c">1.</text>
</svg>
</body></html>
